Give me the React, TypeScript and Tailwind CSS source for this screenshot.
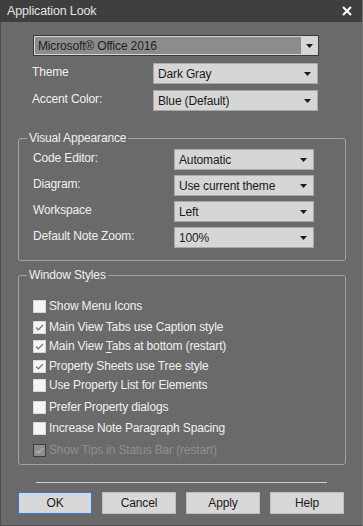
import React from 'react';

const font = { fontFamily: '"Liberation Sans", Arial, sans-serif' };

const Arrow: React.FC = () => (
  <svg width="7" height="4" viewBox="0 0 7 4" className="shrink-0">
    <path d="M0 0h7L3.5 4z" fill="#1c1c1c" />
  </svg>
);

const Combo: React.FC<{ value: string; className: string }> = ({ value, className }) => (
  <div className={`flex items-center bg-[#d6d6d6] border border-[#a9a9a9] ${className}`}>
    <span className="flex-1 pl-[4px] text-[12px] text-[#1a1a1a] leading-none">{value}</span>
    <div className="w-[19px] flex justify-center">
      <Arrow />
    </div>
  </div>
);

interface CheckRow {
  label: React.ReactNode;
  checked: boolean;
  disabled?: boolean;
  mt: string;
}

const checks: CheckRow[] = [
  { label: 'Show Menu Icons', checked: false, mt: 'mt-[30px]' },
  { label: 'Main View Tabs use Caption style', checked: true, mt: 'mt-[5px]' },
  {
    label: (
      <>
        Main View <span className="underline underline-offset-2">T</span>abs at bottom (restart)
      </>
    ),
    checked: true,
    mt: 'mt-[3px]'
  },
  { label: 'Property Sheets use Tree style', checked: true, mt: 'mt-[4px]' },
  { label: 'Use Property List for Elements', checked: false, mt: 'mt-[3px]' },
  { label: 'Prefer Property dialogs', checked: false, mt: 'mt-[6px]' },
  { label: 'Increase Note Paragraph Spacing', checked: false, mt: 'mt-[5px]' },
  { label: 'Show Tips in Status Bar (restart)', checked: true, disabled: true, mt: 'mt-[6px]' }
];

const CheckBox: React.FC<{ checked: boolean; disabled?: boolean }> = ({ checked, disabled }) => (
  <div
    className={`w-[13px] h-[13px] shrink-0 flex items-center justify-center border ${
      disabled ? 'bg-[#8d8d8d] border-[#3e3e3e]' : 'bg-[#f4f4f4] border-[#d8d8d8]'
    }`}
  >
    {checked && (
      <svg width="9" height="7" viewBox="0 0 9 7">
        <path
          d="M1 3.5L3.3 5.8L8 1"
          fill="none"
          stroke={disabled ? '#b4b4b4' : '#7a7a7a'}
          strokeWidth="1.3"
        />
      </svg>
    )}
  </div>
);

const selects = [
  { label: 'Code Editor:', value: 'Automatic' },
  { label: 'Diagram:', value: 'Use current theme' },
  { label: 'Workspace', value: 'Left' },
  { label: 'Default Note Zoom:', value: '100%' }
];

export default function App() {
  return (
    <div style={font} className="w-[363px] h-[526px] bg-[#6a6a6a] flex flex-col border-r border-[#737373] tracking-[-0.15px]">
      {/* Title bar */}
      <div className="h-[22px] bg-[#3f3f3f] flex items-center justify-between pl-[7px] pr-[10px] shrink-0">
        <span className="text-[12.5px] text-[#e2e2e2]">Application Look</span>
        <svg width="10" height="10" viewBox="0 0 10 10">
          <path d="M1 1L9 9M9 1L1 9" stroke="#ffffff" strokeWidth="2" />
        </svg>
      </div>

      <div className="flex flex-col text-[12px] text-[#f0f0f0] border-l border-b border-[#4c4c4c] flex-1">
        {/* Look selector */}
        <div className="ml-[32px] mt-[13px] w-[286px] h-[21px] flex border border-[#3a3a3a] bg-[#d6d6d6] p-[1px]">
          <div className="w-[266px] bg-[#8c8c8c] flex items-center pl-[3px] text-[#1e1e1e] leading-none">
            Microsoft® Office 2016
          </div>
          <div className="flex-1 flex items-center justify-center">
            <Arrow />
          </div>
        </div>

        <div className="ml-[31px] mt-[7px] flex items-center">
          <span className="w-[121px] mb-[3px]">Theme</span>
          <Combo value="Dark Gray" className="w-[165px] h-[21px]" />
        </div>
        <div className="ml-[31px] mt-[6px] flex items-center">
          <span className="w-[121px] mb-[3px]">Accent Color:</span>
          <Combo value="Blue (Default)" className="w-[165px] h-[21px]" />
        </div>

        {/* Visual Appearance */}
        <fieldset className="ml-[17px] mt-[19px] w-[328px] h-[131px] border border-[#a2a2a2] rounded-[3px] px-[14px]">
          <legend className="ml-[-6px] px-[2px] leading-[16px]">Visual Appearance</legend>
          <div className="flex flex-col gap-[5px] mt-[3px]">
            {selects.map((s) => (
              <div key={s.label} className="flex items-center">
                <span className="w-[141px] mb-[3px]">{s.label}</span>
                <Combo value={s.value} className="w-[140px] h-[21px]" />
              </div>
            ))}
          </div>
        </fieldset>

        {/* Window Styles */}
        <fieldset className="ml-[17px] mt-[6px] w-[328px] h-[198px] border border-[#a2a2a2] rounded-[3px] px-[14px]">
          <legend className="ml-[-6px] px-[2px] leading-[16px]">Window Styles</legend>
          <div className="flex flex-col mt-[-15px]">
            {checks.map((c, i) => (
              <div key={i} className={`flex items-center h-[16px] ${c.mt}`}>
                <CheckBox checked={c.checked} disabled={c.disabled} />
                <span className={`ml-[3px] ${c.disabled ? 'text-[#8f8f8f]' : ''}`}>{c.label}</span>
              </div>
            ))}
          </div>
        </fieldset>

        {/* Separator */}
        <div className="ml-[35px] mt-[17px] w-[291px] h-px bg-[#cfcfcf]" />

        {/* Buttons */}
        <div className="ml-[17px] mt-[9px] flex gap-[10px]">
          {['OK', 'Cancel', 'Apply', 'Help'].map((b) => (
            <button
              key={b}
              className={`w-[74px] h-[22px] bg-[#d8d8d8] text-[#1a1a1a] text-[12px] border ${
                b === 'OK' ? 'border-[#2b7bd6]' : 'border-[#bdbdbd]'
              }`}
            >
              {b}
            </button>
          ))}
        </div>
      </div>
    </div>
  );
}
